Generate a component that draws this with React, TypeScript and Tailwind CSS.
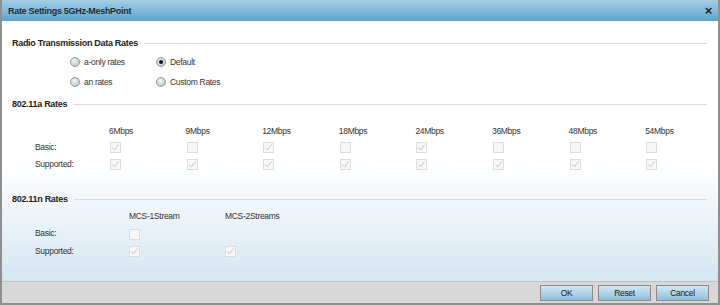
import React from "react";

const aRates = [
  { label: "6Mbps", basic: true },
  { label: "9Mbps", basic: false },
  { label: "12Mbps", basic: true },
  { label: "18Mbps", basic: false },
  { label: "24Mbps", basic: true },
  { label: "36Mbps", basic: false },
  { label: "48Mbps", basic: false },
  { label: "54Mbps", basic: false },
];

function Check({ checked }: { checked: boolean }) {
  return (
    <span className="inline-flex h-[11px] w-[11px] items-center justify-center border border-[#dcdcdc] bg-[#f7f7f7]">
      {checked && (
        <svg width="9" height="9" viewBox="0 0 9 9">
          <path d="M1.5 4.5 L3.5 7 L7.5 1.5" fill="none" stroke="#c4c4c4" strokeWidth="1" />
        </svg>
      )}
    </span>
  );
}

function Radio({ on, label }: { on?: boolean; label: string }) {
  return (
    <label className="flex h-[12px] items-center gap-[4px]">
      <span className="flex h-[10px] w-[10px] items-center justify-center rounded-full border border-[#8d99a3] bg-[radial-gradient(circle_at_40%_35%,#f2f4f6,#b3bcc4)]">
        {on && <span className="h-[4px] w-[4px] rounded-full bg-[#111]" />}
      </span>
      <span>{label}</span>
    </label>
  );
}

function Heading({ children, className }: { children: React.ReactNode; className: string }) {
  return (
    <div className={`flex h-[12px] items-center gap-[6px] pl-[10px] pr-[11px] ${className}`}>
      <span className="text-[9px] font-bold text-[#222]">{children}</span>
      <span className="h-px flex-1 bg-[#dadada]" />
    </div>
  );
}

function Btn({ children }: { children: React.ReactNode }) {
  return (
    <button className="h-[16px] w-[53px] border border-[#8a8a8a] bg-linear-to-b from-[#d3e8f3] to-[#8fc0dc] text-[8.5px] leading-[14px] text-[#222]">
      {children}
    </button>
  );
}

export default function App() {
  return (
    <div className="flex h-[305px] w-[720px] flex-col overflow-hidden border-x-2 border-b-2 border-[#8f8f8f] font-['Liberation_Sans',Arial,sans-serif] text-[8.5px] leading-[12px] tracking-[-0.3px] text-[#333]">
      <div className="flex h-[21px] shrink-0 items-center justify-between bg-linear-to-b from-[#a3cee5] to-[#5ea4cc] pl-[6px] pr-[6px]">
        <span className="text-[9px] font-bold text-[#1f2d38]">Rate Settings 5GHz-MeshPoint</span>
        <span className="text-[13px] font-bold leading-none text-[#222]">×</span>
      </div>

      <div className="flex min-h-0 flex-1 flex-col bg-linear-to-b from-white from-55% to-[#d5e6f1] pt-[16px]">
        <Heading className="">Radio Transmission Data Rates</Heading>
        <div className="mt-[7px] grid grid-cols-[86px_96px] gap-y-[8px] pl-[68px]">
          <Radio label="a-only rates" />
          <Radio on label="Default" />
          <Radio label="an rates" />
          <Radio label="Custom Rates" />
        </div>

        <Heading className="mt-[10px]">802.11a Rates</Heading>
        <div className="mt-[15px] grid grid-cols-[74px_repeat(8,76.6px)] grid-rows-[12px_12px_12px] items-center gap-y-[4px] pl-[33px]">
          <span />
          {aRates.map((r) => (
            <span key={r.label}>{r.label}</span>
          ))}
          <span>Basic:</span>
          {aRates.map((r) => (
            <span key={r.label} className="flex pl-[1px]">
              <Check checked={r.basic} />
            </span>
          ))}
          <span className="mt-[2px]">Supported:</span>
          {aRates.map((r) => (
            <span key={r.label} className="mt-[2px] flex pl-[1px]">
              <Check checked />
            </span>
          ))}
        </div>

        <Heading className="mt-[24px]">802.11n Rates</Heading>
        <div className="mt-[5px] grid grid-cols-[94px_96px_96px] grid-rows-[12px_12px_12px] items-center gap-y-[5px] pl-[33px]">
          <span />
          <span>MCS-1Stream</span>
          <span>MCS-2Streams</span>
          <span>Basic:</span>
          <span className="flex pt-[2px]">
            <Check checked={false} />
          </span>
          <span />
          <span className="mt-[2px]">Supported:</span>
          <span className="mt-[2px] flex">
            <Check checked />
          </span>
          <span className="mt-[2px] flex">
            <Check checked />
          </span>
        </div>
      </div>

      <div className="flex h-[22px] shrink-0 items-center justify-end gap-[5px] border-t border-[#c4c4c4] bg-[#d8d8d8] pr-[9px]">
        <Btn>OK</Btn>
        <Btn>Reset</Btn>
        <Btn>Cancel</Btn>
      </div>
    </div>
  );
}
